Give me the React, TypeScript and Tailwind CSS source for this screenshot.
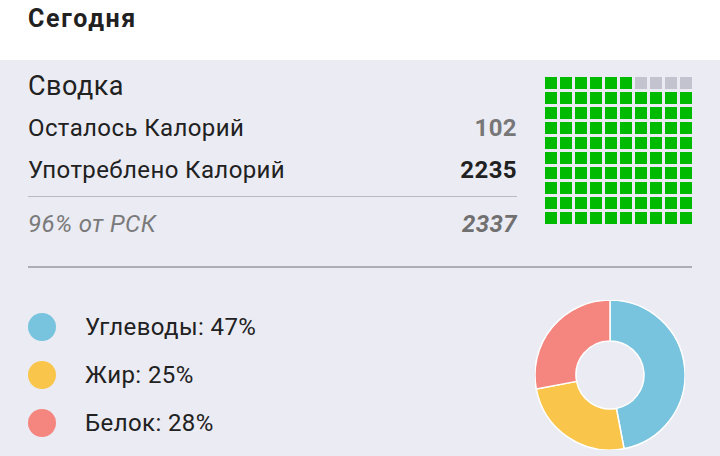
const macros = [
  { label: 'Углеводы', pct: 47, color: '#78c3dd' },
  { label: 'Жир', pct: 25, color: '#f9c54b' },
  { label: 'Белок', pct: 28, color: '#f4867f' },
];

// annular sector, angles in degrees clockwise from 12 o'clock
function sector(cx: number, cy: number, r1: number, r2: number, a0: number, a1: number) {
  const pt = (r: number, a: number) => {
    const rad = ((a - 90) * Math.PI) / 180;
    return `${cx + r * Math.cos(rad)} ${cy + r * Math.sin(rad)}`;
  };
  const large = a1 - a0 > 180 ? 1 : 0;
  return [
    `M ${pt(r2, a0)}`,
    `A ${r2} ${r2} 0 ${large} 1 ${pt(r2, a1)}`,
    `L ${pt(r1, a1)}`,
    `A ${r1} ${r1} 0 ${large} 0 ${pt(r1, a0)}`,
    'Z',
  ].join(' ');
}

function Donut() {
  let start = 0;
  return (
    <svg width="150" height="150" viewBox="0 0 150 150" className="mt-[32px] mr-[7px] shrink-0">
      {macros.map((m) => {
        const a0 = start;
        const a1 = start + (m.pct / 100) * 360;
        start = a1;
        return (
          <path
            key={m.label}
            d={sector(75, 75, 34, 75, a0, a1)}
            fill={m.color}
            stroke="#ffffff"
            strokeWidth="1.5"
            strokeLinejoin="round"
          />
        );
      })}
    </svg>
  );
}

function Row({
  label,
  value,
  labelClass,
  valueClass,
}: {
  label: string;
  value: string;
  labelClass: string;
  valueClass: string;
}) {
  return (
    <div className="flex h-[42px] items-center justify-between text-[24px] leading-[28px] tracking-[0.4px]">
      <span className={labelClass}>{label}</span>
      <span className={valueClass}>{value}</span>
    </div>
  );
}

export default function App() {
  return (
    <div className="h-[456px] w-[720px] overflow-hidden bg-[#ebebf3] font-['Roboto',sans-serif] text-[#212121]">
      <header className="h-[60px] bg-white px-[28px] pt-[5px]">
        <h1 className="text-[25px] leading-[28px] font-bold tracking-[1.7px]">Сегодня</h1>
      </header>

      <section className="flex gap-[28px] px-[28px] pt-[11px]">
        <div className="flex-1">
          <div className="text-[27px] leading-[30px] tracking-[0.5px]">Сводка</div>
          <div className="mt-[6px]">
            <Row label="Осталось Калорий" value="102" labelClass="" valueClass="font-bold text-[#777777]" />
            <Row label="Употреблено Калорий" value="2235" labelClass="" valueClass="font-bold" />
          </div>
          <div className="mt-[5px] h-px bg-[#b9b9c1]" />
          <div className="mt-[6px]">
            <Row
              label="96% от РСК"
              value="2337"
              labelClass="italic text-[#7a7a7a]"
              valueClass="italic font-bold text-[#707070]"
            />
          </div>
        </div>
        <div className="mt-[6px] grid w-[147px] shrink-0 grid-cols-10 gap-[3px] self-start">
          {Array.from({ length: 100 }, (_, i) => (
            <div
              key={i}
              className={i >= 6 && i < 10 ? 'h-[12px] w-[12px] bg-[#c3c3cf]' : 'h-[12px] w-[12px] bg-[#00ba00]'}
            />
          ))}
        </div>
      </section>

      <div className="mx-[28px] mt-[21px] h-[2px] bg-[#adadb5]" />

      <section className="flex items-start px-[28px]">
        <ul className="flex-1 pt-[35px]">
          {macros.map((m) => (
            <li key={m.label} className="flex h-[48px] items-center gap-[29px]">
              <span className="h-[28px] w-[28px] rounded-full" style={{ backgroundColor: m.color }} />
              <span className="text-[24px] leading-[28px] tracking-[0.4px]">
                {m.label}: {m.pct}%
              </span>
            </li>
          ))}
        </ul>
        <Donut />
      </section>
    </div>
  );
}
